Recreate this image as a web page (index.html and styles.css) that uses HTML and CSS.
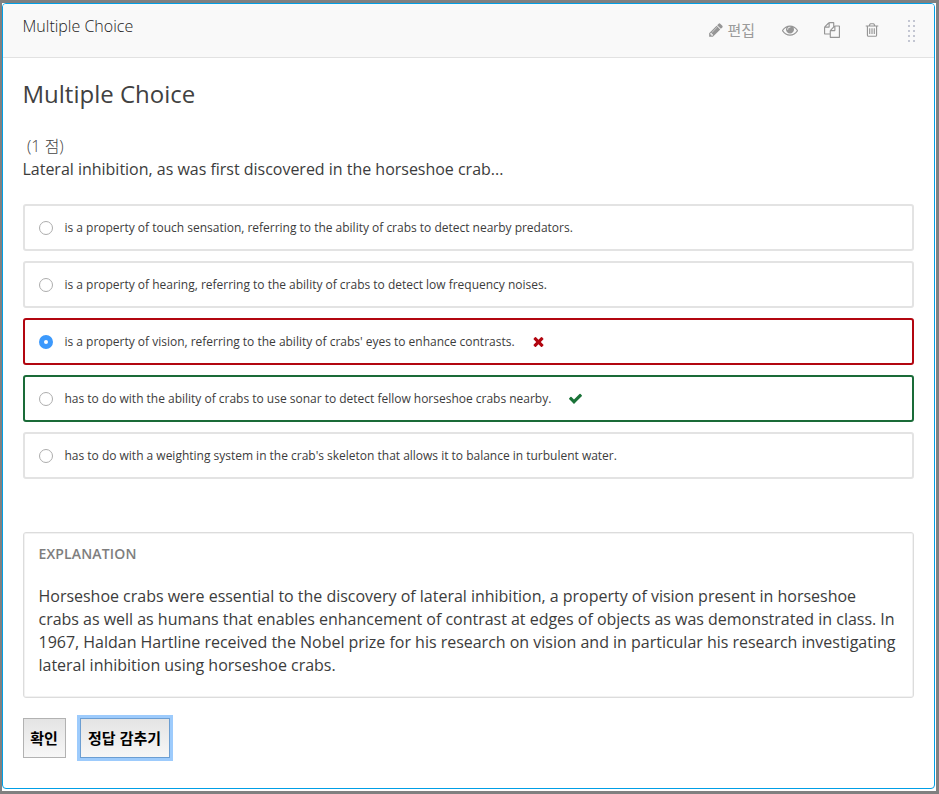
FILE: index.html
```html
<!DOCTYPE html>
<html lang="ko">
<head>
<meta charset="utf-8">
<title>Multiple Choice</title>
<link rel="stylesheet" href="styles.css">
</head>
<body>
<div class="frame">
<section class="component">
  <header class="component-header">
    <span class="component-name">Multiple Choice</span>
    <div class="actions">
      <a class="action edit"><svg class="icon" viewBox="0 0 1792 1792"><path d="M491 1536l91-91-235-235-91 91v107h128v128h107zM1014 608q0-22-22-22-10 0-17 7l-542 542q-7 7-7 17 0 22 22 22 10 0 17-7l542-542q7-7 7-17zM960 416l416 416-832 832H128v-416zM1643 512q0 53-37 90l-166 166-416-416 166-165q36-38 90-38 53 0 91 38l235 234q37 39 37 91z"/></svg><span class="edit-label">편집</span></a>
      <a class="action view"><svg class="icon" viewBox="0 0 1792 1792"><path d="M1664 960q-152-236-381-353 61 104 61 225 0 185-131.5 316.5t-316.5 131.5-316.5-131.5-131.5-316.5q0-121 61-225-229 117-381 353 133 205 333.5 326.5t434.5 121.5 434.5-121.5 333.5-326.5zm-720-384q0-20-14-34t-34-14q-125 0-214.5 89.5t-89.5 214.5q0 20 14 34t34 14 34-14 14-34q0-86 61-147t147-61q20 0 34-14t14-34zm848 384q0 34-20 69-140 230-376.5 368.5t-499.5 138.5-499.5-139-376.5-368q-20-35-20-69t20-69q140-229 376.5-368t499.5-139 499.5 139 376.5 368q20 35 20 69z"/></svg></a>
      <a class="action copy"><svg class="icon" viewBox="0 0 1792 1792"><path d="M1696 384q40 0 68 28t28 68v1216q0 40-28 68t-68 28h-960q-40 0-68-28t-28-68v-288h-544q-40 0-68-28t-28-68v-672q0-40 20-88t48-76l408-408q28-28 76-48t88-20h416q40 0 68 28t28 68v328q68-40 128-40h416zm-544 213l-299 299h299v-299zm-640-384l-299 299h299v-299zm196 647l316-316v-416h-384v416q0 40-28 68t-68 28h-416v640h512v-256q0-40 20-88t48-76zm956 804v-1152h-384v416q0 40-28 68t-68 28h-416v640h896z"/></svg></a>
      <a class="action delete"><svg class="icon" viewBox="0 0 1792 1792"><path d="M704 736v576q0 14-9 23t-23 9h-64q-14 0-23-9t-9-23v-576q0-14 9-23t23-9h64q14 0 23 9t9 23zm256 0v576q0 14-9 23t-23 9h-64q-14 0-23-9t-9-23v-576q0-14 9-23t23-9h64q14 0 23 9t9 23zm256 0v576q0 14-9 23t-23 9h-64q-14 0-23-9t-9-23v-576q0-14 9-23t23-9h64q14 0 23 9t9 23zm128 724v-948h-896v948q0 22 7 40.5t14.5 27 10.5 8.5h832q3 0 10.5-8.5t14.5-27 7-40.5zm-672-1076h448l-48-117q-7-9-17-11h-317q-10 2-17 11zm928 32v64q0 14-9 23t-23 9h-96v948q0 83-47 143.5t-113 60.5h-832q-66 0-113-58.5t-47-141.5v-952h-96q-14 0-23-9t-9-23v-64q0-14 9-23t23-9h309l70-167q15-37 54-63t79-26h320q40 0 79 26t54 63l70 167h309q14 0 23 9t9 23z"/></svg></a>
      <span class="drag"><i></i><i></i><i></i><i></i><i></i><i></i><i></i><i></i><i></i><i></i></span>
    </div>
  </header>
  <div class="problem">
    <h2 class="title">Multiple Choice</h2>
    <div class="points">(1 점)</div>
    <p class="question">Lateral inhibition, as was first discovered in the horseshoe crab...</p>
    <div class="choices">
      <label class="choice"><span class="radio"></span><span class="choice-text">is a property of touch sensation, referring to the ability of crabs to detect nearby predators.</span></label>
      <label class="choice"><span class="radio"></span><span class="choice-text">is a property of hearing, referring to the ability of crabs to detect low frequency noises.</span></label>
      <label class="choice incorrect"><span class="radio checked"></span><span class="choice-text">is a property of vision, referring to the ability of crabs' eyes to enhance contrasts.</span><svg class="mark" viewBox="0 0 1792 1792"><path d="M1490 1322q0 40-28 68l-136 136q-28 28-68 28t-68-28l-294-294-294 294q-28 28-68 28t-68-28l-136-136q-28-28-28-68t28-68l294-294-294-294q-28-28-28-68t28-68l136-136q28-28 68-28t68 28l294 294 294-294q28-28 68-28t68 28l136 136q28 28 28 68t-28 68l-294 294 294 294q28 28 28 68z"/></svg></label>
      <label class="choice correct"><span class="radio"></span><span class="choice-text">has to do with the ability of crabs to use sonar to detect fellow horseshoe crabs nearby.</span><svg class="mark" viewBox="0 0 1792 1792"><path d="M1671 566q0 40-28 68l-724 724-136 136q-28 28-68 28t-68-28l-136-136-362-362q-28-28-28-68t28-68l136-136q28-28 68-28t68 28l294 295 656-657q28-28 68-28t68 28l136 136q28 28 28 68z"/></svg></label>
      <label class="choice"><span class="radio"></span><span class="choice-text">has to do with a weighting system in the crab's skeleton that allows it to balance in turbulent water.</span></label>
    </div>
    <div class="explanation">
      <h3 class="explanation-title">EXPLANATION</h3>
      <p class="explanation-text">Horseshoe crabs were essential to the discovery of lateral inhibition, a property of vision present in horseshoe crabs as well as humans that enables enhancement of contrast at edges of objects as was demonstrated in class. In 1967, Haldan Hartline received the Nobel prize for his research on vision and in particular his research investigating lateral inhibition using horseshoe crabs.</p>
    </div>
    <div class="buttons">
      <button class="btn check">확인</button>
      <button class="btn hide-answer">정답 감추기</button>
    </div>
  </div>
</section>
</div>
</body>
</html>
```
FILE: styles.css
```css
* { box-sizing: border-box; }
body {
  margin: 0;
  height: 794px;
  padding: 3px 3px 3px 2px;
  background: #808080;
  font-family: "Open Sans", "Noto Sans CJK KR", sans-serif;
  color: #3c3c3c;
}
.frame {
  height: 788px;
  padding: 0 1px 2px 0;
  background: #fff;
}
.component {
  height: 786px;
  border: 1px solid #009fe6;
  border-radius: 4px;
  overflow: hidden;
  background: #fff;
}
.component-header {
  display: flex;
  justify-content: space-between;
  height: 54px;
  padding: 0 19px 0 19.5px;
  background: #f9f9f9;
  border-bottom: 1px solid #e2e2e2;
}
.component-name {
  padding-top: 10px;
  font-size: 16px;
  line-height: 24px;
  font-weight: 300;
  color: #222;
}
.actions {
  display: flex;
  align-items: flex-start;
  padding-top: 16px;
  color: #9b9b9b;
}
.action { display: flex; align-items: center; height: 20px; }
.icon { display: block; width: 16px; height: 16px; fill: #969696; }
.edit-label { margin: -1px 0 0 3px; font-size: 15px; line-height: 20px; }
.view { margin-left: 27px; }
.copy { margin-left: 26px; }
.delete { margin-left: 24px; }
.drag {
  display: grid;
  grid-template-columns: 2px 2px;
  gap: 3px;
  margin: 0 0 0 28px;
}
.drag i { width: 2px; height: 2px; background: #c3c6d2; }
.problem { padding: 0 20px; }
.title {
  margin: 19px 0 0 -0.5px;
  font-size: 24px;
  line-height: 34px;
  font-weight: 400;
  color: #414141;
}
.points {
  margin-top: 23px;
  padding-left: 4px;
  font-size: 16px;
  line-height: 24px;
  font-weight: 300;
  color: #444;
}
.question {
  margin: 0 0 0 -0.5px;
  font-size: 16px;
  line-height: 23px;
  letter-spacing: -0.015px;
}
.choices {
  display: flex;
  flex-direction: column;
  gap: 10px;
  margin-top: 23px;
}
.choice {
  display: flex;
  align-items: center;
  height: 47px;
  padding: 0 14px;
  border: 2px solid #e3e3e3;
  border-radius: 3px;
  font-size: 12px;
  line-height: 18px;
}
.radio {
  flex: none;
  width: 14px;
  height: 14px;
  margin-top: 1px;
  border: 1px solid #adadad;
  border-radius: 50%;
  background: #fff;
}
.radio.checked { border: 5px solid #3c99fc; }
.choice-text { margin-left: 11.5px; letter-spacing: -0.01px; white-space: nowrap; }
.mark { width: 15px; height: 15px; margin: -1px 0 0 16.5px; }
.incorrect { border-color: #b20610; }
.incorrect .mark { fill: #b20610; }
.correct { border-color: #1a6b38; }
.correct .mark { fill: #1a7338; }
.explanation {
  height: 166px;
  margin-top: 53px;
  padding: 9px 14px 0 14.5px;
  border: 1px solid #dcdcdc;
  border-radius: 3px;
  box-shadow: inset 0 0 0 1px #f2f2f2;
}
.explanation-title {
  margin: 0;
  font-size: 14px;
  line-height: 23px;
  font-weight: 600;
  letter-spacing: 0.15px;
  color: #7e7e7e;
}
.explanation-text {
  margin: 20px 0 0;
  font-size: 16px;
  line-height: 23px;
  letter-spacing: -0.015px;
}
.buttons { display: flex; gap: 14px; margin-top: 20px; }
.btn {
  height: 40px;
  padding: 0 1px 1px 0;
  border: 1px solid #b2b2b2;
  background: linear-gradient(#e4e4e4, #f7f7f7);
  color: #000;
  font: 700 15px/20px "Noto Sans CJK KR", sans-serif;
}
.check { width: 43px; }
.hide-answer {
  width: 90px;
  border-color: #6c9ed2;
  border-radius: 0;
  box-shadow: 0 0 0 3px #9dcbfc;
}
```
